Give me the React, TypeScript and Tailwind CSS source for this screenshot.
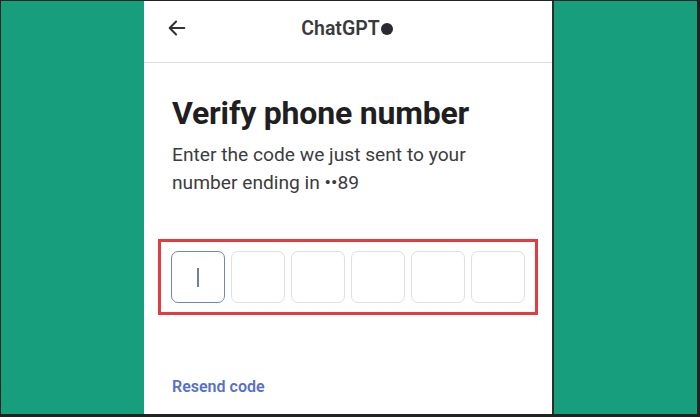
import React from 'react'

function OtpBox({ active }: { active?: boolean }) {
    return (
        <div
            className={`w-[54px] h-[52px] rounded-[7px] border-[1.5px] flex items-center justify-center ${
                active ? 'border-[#7386b8]' : 'border-[#e2dde6]'
            }`}
        >
            {active && <div className="w-[2px] h-[19px] bg-[#6f7fa6]" />}
        </div>
    )
}

export default function App() {
    return (
        <div
            className="w-[700px] h-[417px] flex border-t border-l border-r-[3px] border-b-[3px] border-[#1f2421] bg-[#179e7c] overflow-hidden"
            style={{ fontFamily: 'Roboto, "Liberation Sans", sans-serif' }}
        >
            <div className="w-[143px] shrink-0 bg-[#179e7c]" />
            <div className="w-[408px] shrink-0 bg-white flex flex-col">
                <div className="h-[62px] shrink-0 flex items-center px-[22px] border-b border-[#dcdcdc] relative">
                    <svg width="22" height="22" viewBox="0 0 24 24" fill="none" stroke="#333" strokeWidth="2.2" strokeLinecap="round" strokeLinejoin="round" className="-mt-[8px]">
                        <path d="M20 12H4M11 5l-7 7 7 7" />
                    </svg>
                    <div className="absolute left-0 right-0 top-[13px] flex justify-center items-center pr-[2px]">
                        <span className="text-[19.5px] font-semibold text-[#3a3a3c]">ChatGPT</span>
                        <span className="w-[12px] h-[12px] rounded-full bg-[#2a2a30] ml-[1px]" />
                    </div>
                </div>
                <div className="px-[28px] pt-[31px]">
                    <h1 className="text-[32px] leading-[38px] font-bold text-[#1f1f22] tracking-[-0.2px]">Verify phone number</h1>
                    <p className="mt-[9px] text-[19.2px] leading-[28px] text-[#3c3c40]">
                        Enter the code we just sent to your
                        <br />
                        number ending in ••89
                    </p>
                </div>
                <div className="mt-[42px] ml-[14px] w-[380px] h-[76px] border-[3.5px] border-[#e53a3f] flex items-center pl-[10px] gap-[6px]">
                    <OtpBox active />
                    <OtpBox />
                    <OtpBox />
                    <OtpBox />
                    <OtpBox />
                    <OtpBox />
                </div>
                <div className="mt-[60px] px-[28px]">
                    <span className="text-[16px] font-semibold text-[#5671c8]">Resend code</span>
                </div>
            </div>
            <div className="w-[2px] shrink-0 bg-[#2a2f2c]" />
            <div className="flex-1 bg-[#179e7c]" />
        </div>
    )
}
